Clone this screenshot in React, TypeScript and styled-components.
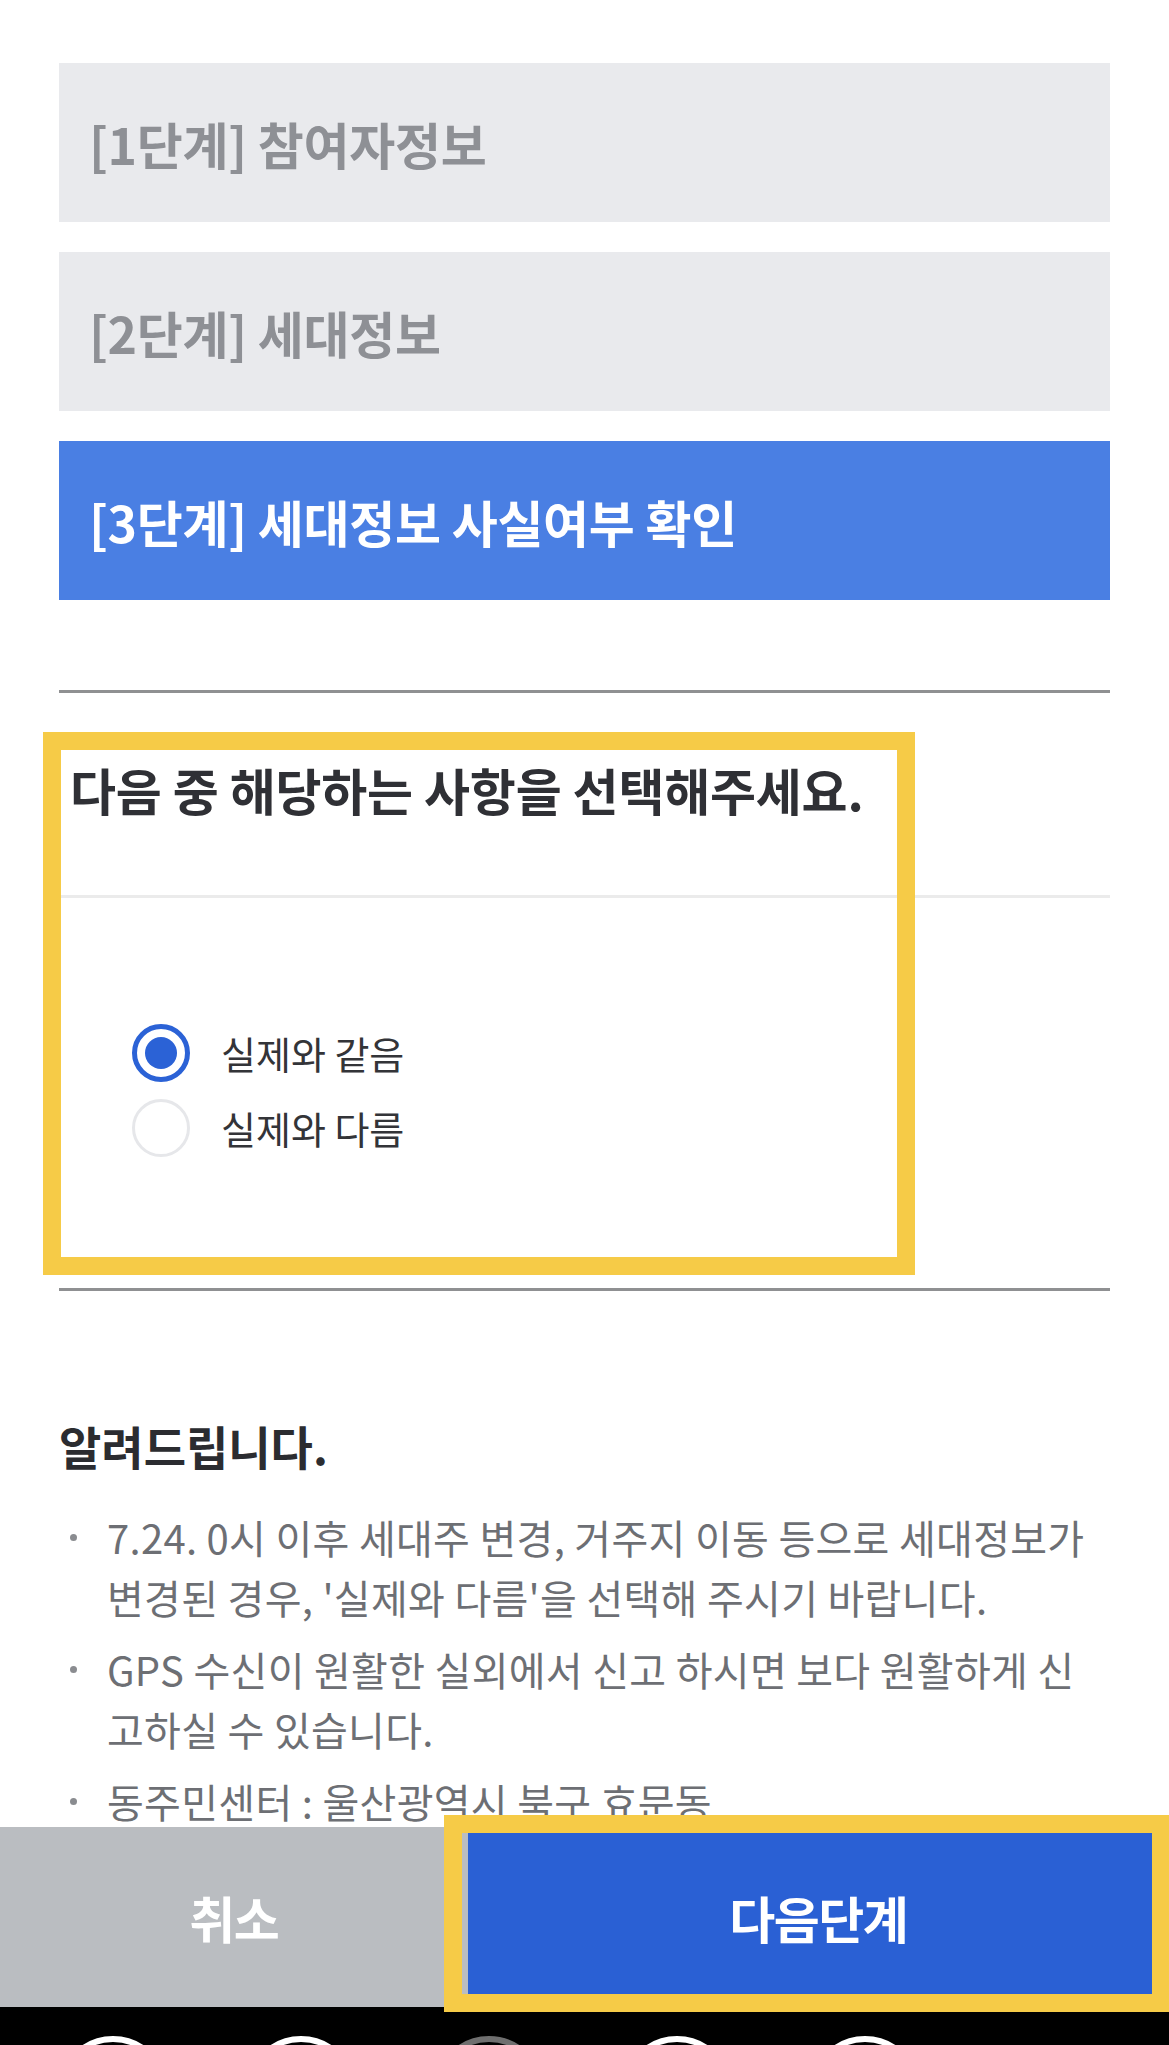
import React from "react";
import styled, { createGlobalStyle, css } from "styled-components";

const GlobalStyle = createGlobalStyle`
  html, body {
    margin: 0;
    padding: 0;
    background: #ffffff;
  }
  body {
    font-family: "Noto Sans CJK KR", "Noto Sans", sans-serif;
    -webkit-font-smoothing: antialiased;
  }
  * { box-sizing: border-box; }
`;

const Page = styled.div`
  height: 100vh;
  display: flex;
  flex-direction: column;
  overflow: hidden;
`;

const Main = styled.main`
  flex: 1;
  overflow: hidden;
  padding: 63px 59px 0;
`;

const Steps = styled.div`
  display: flex;
  flex-direction: column;
  gap: 30px;
`;

const StepBar = styled.div<{ $active?: boolean }>`
  height: 159px;
  display: flex;
  align-items: center;
  padding-left: 30px;
  font-size: 50px;
  font-weight: 700;
  letter-spacing: -0.3px;
  background: ${(p) => (p.$active ? "#4a7fe3" : "#e9eaed")};
  color: ${(p) => (p.$active ? "#ffffff" : "#8e9095")};
`;

const Divider = styled.div<{ $light?: boolean; $gap?: number }>`
  height: 3px;
  margin-top: ${(p) => p.$gap ?? 0}px;
  background: ${(p) => (p.$light ? "#ebebeb" : "#8f9092")};
`;

const QuestionSection = styled.section`
  position: relative;
`;

const QuestionTitle = styled.h2`
  margin: 0;
  padding: 62px 0 72px 11px;
  font-size: 50px;
  line-height: 68px;
  font-weight: 700;
  letter-spacing: -0.2px;
  color: #2f3035;
`;

const RadioList = styled.div`
  display: flex;
  flex-direction: column;
  padding: 117px 0 123px 73px;
`;

const RadioRow = styled.label`
  height: 75px;
  display: flex;
  align-items: center;
  gap: 31px;
  font-size: 38px;
  letter-spacing: 0;
  color: #333438;
`;

const RadioMark = styled.span<{ $checked?: boolean }>`
  flex: none;
  width: 58px;
  height: 58px;
  border-radius: 50%;
  display: flex;
  align-items: center;
  justify-content: center;
  ${(p) =>
    p.$checked
      ? css`
          border: 5px solid #2b62d6;
          &::after {
            content: "";
            width: 32px;
            height: 32px;
            border-radius: 50%;
            background: #2b62d6;
          }
        `
      : css`
          border: 3px solid #e6e7ea;
        `}
`;

const Highlight = styled.div`
  position: absolute;
  border: 18px solid #f6cb47;
  pointer-events: none;
`;

const QuestionHighlight = styled(Highlight)`
  left: -16px;
  top: 39px;
  width: 872px;
  height: 543px;
`;

const NoticeTitle = styled.h3`
  margin: 124px 0 0;
  font-size: 46px;
  line-height: 60px;
  font-weight: 700;
  letter-spacing: 0;
  color: #2b2c30;
`;

const NoticeList = styled.ul`
  margin: 32px 0 0;
  padding: 0;
  list-style: none;
  display: flex;
  flex-direction: column;
  gap: 12px;
`;

const NoticeItem = styled.li`
  display: grid;
  grid-template-columns: 48px 1fr;
  font-size: 40px;
  line-height: 60px;
  letter-spacing: 0.3px;
  color: #6d6f74;
`;

const Bullet = styled.span`
  height: 60px;
  display: flex;
  align-items: center;
  padding-left: 11px;
  &::before {
    content: "";
    width: 7px;
    height: 7px;
    border-radius: 50%;
    background: #8a8c90;
  }
`;

const Footer = styled.footer`
  flex: none;
  position: relative;
`;

const ButtonRow = styled.div`
  height: 180px;
  display: flex;
`;

const ActionButton = styled.button<{ $primary?: boolean }>`
  border: none;
  margin: 0;
  padding: 0;
  font-family: inherit;
  font-size: 50px;
  font-weight: 700;
  letter-spacing: -1.5px;
  color: #ffffff;
  background: ${(p) => (p.$primary ? "#2a60d4" : "#babdc1")};
  ${(p) =>
    p.$primary
      ? css`
          flex: 1;
        `
      : css`
          width: 40%;
          flex: none;
        `}
`;

const ActionHighlight = styled(Highlight)`
  left: 444px;
  right: -1px;
  top: -12px;
  height: 197px;
`;

const NavBar = styled.nav`
  height: 38px;
  background: #000000;
  display: flex;
  gap: 78px;
  padding: 29px 0 0 58px;
  overflow: hidden;
`;

const NavCircle = styled.span<{ $dim?: boolean }>`
  flex: none;
  width: 110px;
  height: 110px;
  border-radius: 50%;
  border: 6px solid ${(p) => (p.$dim ? "#6f6f6f" : "#ffffff")};
`;

const steps = [
  { label: "[1단계] 참여자정보", active: false },
  { label: "[2단계] 세대정보", active: false },
  { label: "[3단계] 세대정보 사실여부 확인", active: true },
];

const notices = [
  "7.24. 0시 이후 세대주 변경, 거주지 이동 등으로 세대정보가 변경된 경우, '실제와 다름'을 선택해 주시기 바랍니다.",
  "GPS 수신이 원활한 실외에서 신고 하시면 보다 원활하게 신고하실 수 있습니다.",
  "동주민센터 : 울산광역시 북구 효문동",
];

export default function App() {
  return (
    <>
      <GlobalStyle />
      <Page>
        <Main>
          <Steps>
            {steps.map((s) => (
              <StepBar key={s.label} $active={s.active}>
                {s.label}
              </StepBar>
            ))}
          </Steps>

          <Divider $gap={90} />

          <QuestionSection>
            <QuestionTitle>다음 중 해당하는 사항을 선택해주세요.</QuestionTitle>
            <Divider $light />
            <RadioList>
              <RadioRow>
                <RadioMark $checked />
                실제와 같음
              </RadioRow>
              <RadioRow>
                <RadioMark />
                실제와 다름
              </RadioRow>
            </RadioList>
            <QuestionHighlight />
          </QuestionSection>

          <Divider />

          <NoticeTitle>알려드립니다.</NoticeTitle>
          <NoticeList>
            {notices.map((n) => (
              <NoticeItem key={n}>
                <Bullet />
                <span>{n}</span>
              </NoticeItem>
            ))}
          </NoticeList>
        </Main>

        <Footer>
          <ButtonRow>
            <ActionButton>취소</ActionButton>
            <ActionButton $primary>다음단계</ActionButton>
          </ButtonRow>
          <NavBar>
            <NavCircle />
            <NavCircle />
            <NavCircle $dim />
            <NavCircle />
            <NavCircle />
          </NavBar>
          <ActionHighlight />
        </Footer>
      </Page>
    </>
  );
}
